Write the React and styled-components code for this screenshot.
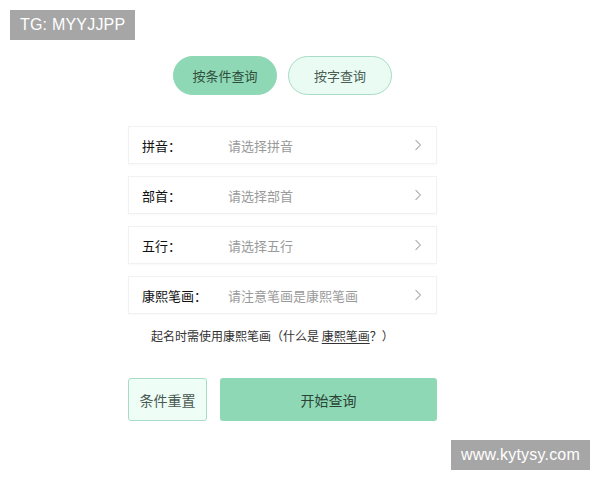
import React from "react";
import styled, { createGlobalStyle } from "styled-components";

const GlobalStyle = createGlobalStyle`
  html, body {
    margin: 0;
    padding: 0;
    background: #ffffff;
    font-family: "Noto Sans CJK SC", "Noto Sans", sans-serif;
  }
`;

const rows = [
  { label: "拼音：", placeholder: "请选择拼音" },
  { label: "部首：", placeholder: "请选择部首" },
  { label: "五行：", placeholder: "请选择五行" },
  { label: "康熙笔画：", placeholder: "请注意笔画是康熙笔画" },
];

const App = () => {
  return (
    <Page>
      <GlobalStyle />
      <Watermark>TG: MYYJJPP</Watermark>
      <Form>
        <Tabs>
          <Tab $active>按条件查询</Tab>
          <Tab>按字查询</Tab>
        </Tabs>
        <Fields>
          {rows.map((r) => (
            <Row key={r.label}>
              <Label>{r.label}</Label>
              <Placeholder>{r.placeholder}</Placeholder>
              <Chevron viewBox="0 0 10 16">
                <path d="M2 2 L8 8 L2 14" />
              </Chevron>
            </Row>
          ))}
        </Fields>
        <Note>
          起名时需使用康熙笔画（什么是 <u>康熙笔画</u>？）
        </Note>
        <Actions>
          <ResetButton>条件重置</ResetButton>
          <SearchButton>开始查询</SearchButton>
        </Actions>
      </Form>
      <Footer>
        <Watermark>www.kytysy.com</Watermark>
      </Footer>
    </Page>
  );
};

const Page = styled.div`
  width: 600px;
  height: 480px;
  padding: 10px 10px 0;
  box-sizing: border-box;
  display: flex;
  flex-direction: column;
`;

const Watermark = styled.div`
  align-self: flex-start;
  background: #a6a6a6;
  color: #ffffff;
  font-family: "Liberation Sans", Arial, sans-serif;
  font-size: 16px;
  height: 30px;
  line-height: 30px;
  padding: 0 10px;
  letter-spacing: 0.2px;
`;

const Form = styled.div`
  width: 309px;
  margin: 16px 0 0 118px;
  display: flex;
  flex-direction: column;
`;

const Tabs = styled.div`
  display: flex;
  justify-content: center;
  gap: 11px;
`;

const Tab = styled.div`
  width: 104px;
  height: 39px;
  box-sizing: border-box;
  border-radius: 20px;
  display: flex;
  align-items: center;
  justify-content: center;
  font-size: 13px;
  color: ${(p) => (p.$active ? "#2f4f3e" : "#4a5e54")};
  background: ${(p) => (p.$active ? "#8fd8b5" : "#e9fbf3")};
  border: 1px solid ${(p) => (p.$active ? "#8fd8b5" : "#a9dcc6")};
`;

const Fields = styled.div`
  display: flex;
  flex-direction: column;
  gap: 12px;
  margin-top: 31px;
`;

const Row = styled.div`
  height: 38px;
  box-sizing: border-box;
  border: 1px solid #f1f1f1;
  box-shadow: 0 1px 2px rgba(0, 0, 0, 0.03);
  display: flex;
  align-items: center;
  padding: 0 14px 0 13px;
`;

const Label = styled.span`
  width: 86px;
  font-size: 13px;
  font-weight: 400;
  color: #111111;
`;

const Placeholder = styled.span`
  flex: 1;
  font-size: 13px;
  color: #9a9a9a;
`;

const Chevron = styled.svg`
  width: 8px;
  height: 14px;
  fill: none;
  stroke: #a8a8a8;
  stroke-width: 1.3;
`;

const Note = styled.div`
  margin-top: 13px;
  padding-left: 23px;
  font-size: 12px;
  color: #333333;

  u {
    text-underline-offset: 2px;
  }
`;

const Actions = styled.div`
  display: flex;
  gap: 13px;
  margin-top: 34px;
`;

const ResetButton = styled.div`
  width: 79px;
  height: 43px;
  box-sizing: border-box;
  border: 1px solid #a9dcc6;
  border-radius: 3px;
  background: #eefdf6;
  color: #4a5a52;
  font-size: 14px;
  display: flex;
  align-items: center;
  justify-content: center;
`;

const SearchButton = styled.div`
  flex: 1;
  height: 43px;
  border-radius: 3px;
  background: #8fd8b5;
  color: #2b4436;
  font-size: 14px;
  display: flex;
  align-items: center;
  justify-content: center;
`;

const Footer = styled.div`
  display: flex;
  justify-content: flex-end;
  margin-top: 19px;
`;

export default App;
